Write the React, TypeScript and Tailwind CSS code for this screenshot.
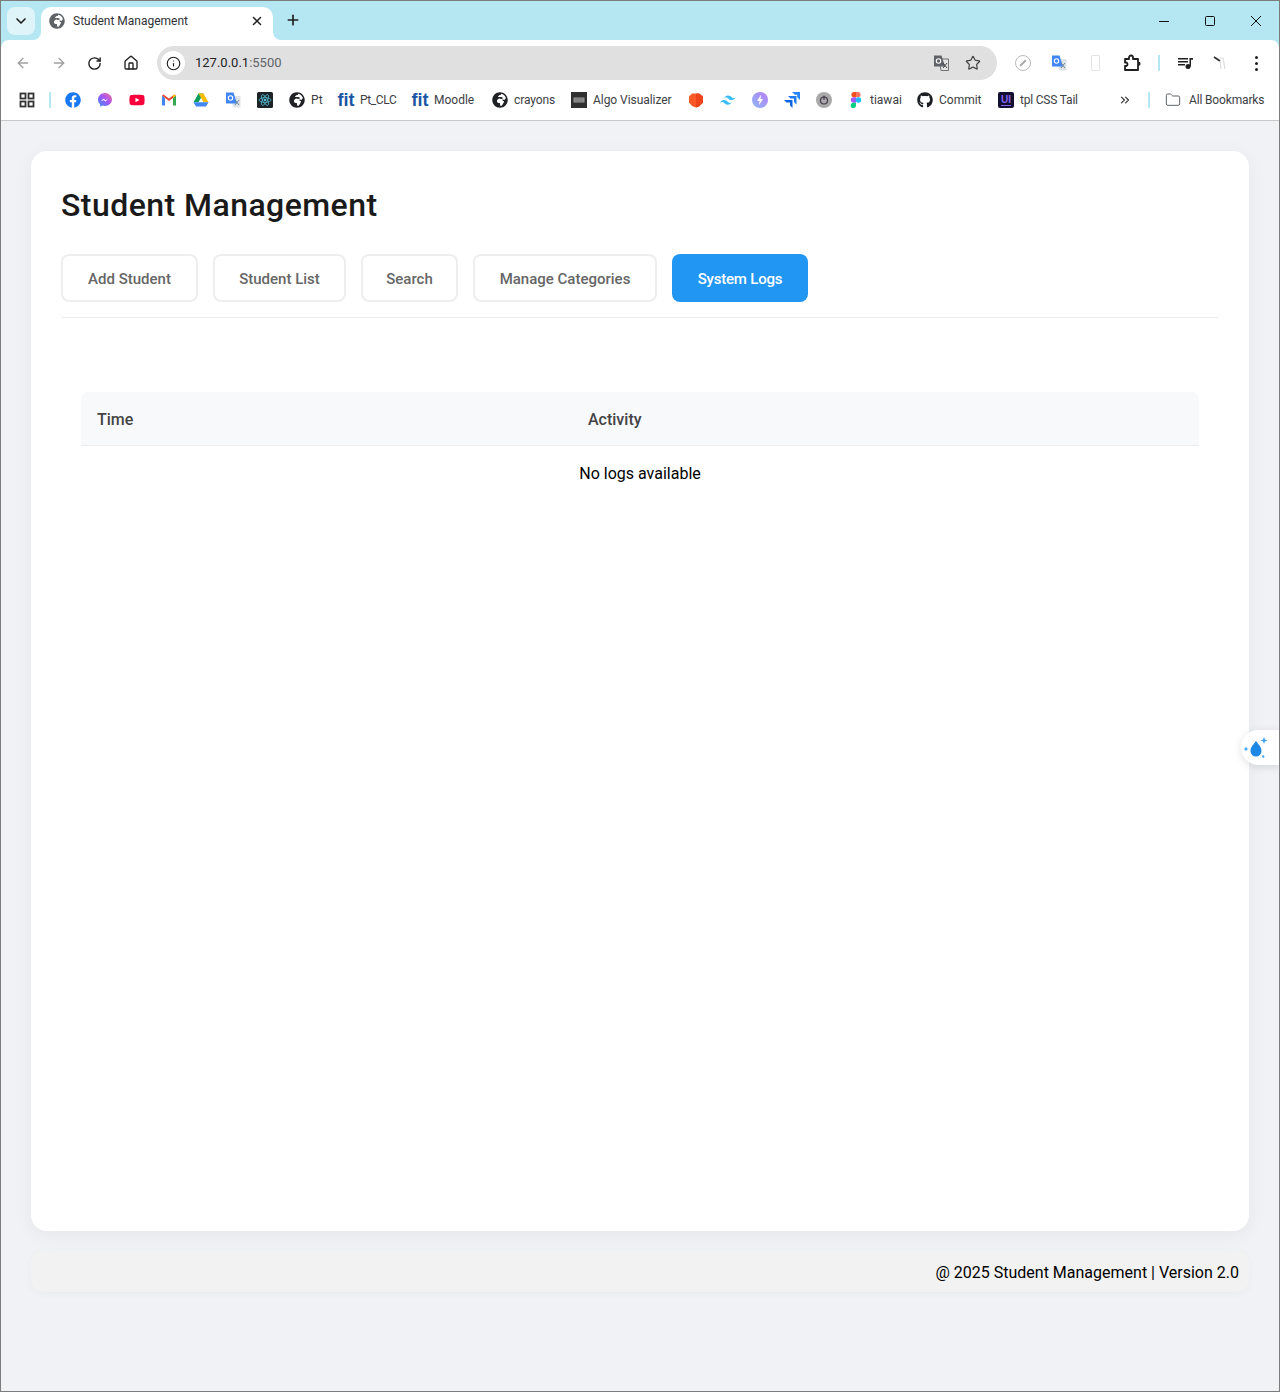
import { ArrowLeft, ArrowRight, RotateCw, House, Info, Star, X, Plus, ChevronDown, ChevronsRight, Folder } from 'lucide-react'
import { FaFacebook, FaGithub, FaGlobeAfrica, FaYoutube } from 'react-icons/fa'

function Translate({ dark = false }: { dark?: boolean }) {
  return (
    <svg width="16" height="16" viewBox="0 0 16 16">
      <path d="M6 4h9.500v11.500H8z" fill={dark ? '#e3e3e3' : '#dfe3e6'} stroke={dark ? '#555' : 'none'} strokeWidth="0.8" />
      <path d="M1 0.500h7.500L12 11.500H1z" fill={dark ? '#5f6368' : '#4285f4'} />
      <circle cx="5.500" cy="6" r="2.200" fill="none" stroke="#fff" strokeWidth="1.100" />
      <path d="M10 8l4 5M14 8l-4 5" stroke={dark ? '#444' : '#6a8a9c'} strokeWidth="1" />
    </svg>
  )
}

function Messenger() {
  return (
    <svg width="16" height="16" viewBox="0 0 16 16">
      <defs>
        <linearGradient id="msg" x1="0" y1="1" x2="1" y2="0">
          <stop offset="0" stopColor="#2f8cf5" />
          <stop offset="0.55" stopColor="#a855f7" />
          <stop offset="1" stopColor="#fb7185" />
        </linearGradient>
      </defs>
      <path d="M8 1C4 1 1 3.900 1 7.600c0 2 .8 3.600 2.200 4.800v2.400l2.200-1.200c.8.200 1.700.4 2.600.4 4 0 7-2.900 7-6.400S12 1 8 1z" fill="url(#msg)" />
      <path d="M3.800 9.600l2.700-3 2 1.600 2.700-1.600-2.600 3-2-1.600z" fill="#fff" />
    </svg>
  )
}

function Gmail() {
  return (
    <svg width="16" height="16" viewBox="0 0 16 16">
      <path d="M1 3.500v10h3V6z" fill="#4285f4" />
      <path d="M12 6v7.500h3v-10z" fill="#34a853" />
      <path d="M1 3.500L8 9l7-5.500-1.500-1L8 6.500 2.500 2.500z" fill="#ea4335" />
      <path d="M12 6l3-2.500-1.500-1L12 3.600z" fill="#fbbc04" />
    </svg>
  )
}

function Drive() {
  return (
    <svg width="16" height="16" viewBox="0 0 16 16">
      <path d="M5.500 1.500h5l-5 8.700H0.500z" fill="#0f9d58" />
      <path d="M10.500 1.500l5 8.700h-5l-5-8.700z" fill="#fbbc04" />
      <path d="M0.500 10.200h15L13 14.500H3z" fill="#4285f4" />
    </svg>
  )
}

function ReactIcon() {
  return (
    <svg width="16" height="16" viewBox="0 0 16 16">
      <rect width="16" height="16" rx="1.500" fill="#1c2429" />
      <circle cx="8" cy="8" r="1.300" fill="#58c4dc" />
      <g fill="none" stroke="#58c4dc" strokeWidth="0.7">
        <ellipse cx="8" cy="8" rx="6" ry="2.400" />
        <ellipse cx="8" cy="8" rx="6" ry="2.400" transform="rotate(60 8 8)" />
        <ellipse cx="8" cy="8" rx="6" ry="2.400" transform="rotate(120 8 8)" />
      </g>
    </svg>
  )
}

function Fit() {
  return <span className="text-[18px] leading-4 font-bold text-[#1b55a3] font-['Liberation_Sans',sans-serif]">fit</span>
}

function Algo() {
  return (
    <svg width="16" height="16" viewBox="0 0 16 16">
      <rect width="16" height="16" fill="#303030" />
      <rect x="2.500" y="5.500" width="11" height="5" fill="#9a9a9a" />
      <path d="M3.500 7h9M3.500 9h9" stroke="#5a5a5a" strokeWidth="0.7" />
    </svg>
  )
}

function Brave() {
  return (
    <svg width="16" height="16" viewBox="0 0 16 16">
      <path d="M4 1.500h7l4 3v6l-4 4-3 1-4-1.500L1 10.500v-6z" fill="#fb5a26" />
      <path d="M8 1.500h3l4 3v6l-4 4-3 1z" fill="#f0451c" />
    </svg>
  )
}

function Tailwind() {
  return (
    <svg width="16" height="16" viewBox="0 0 16 16">
      <path d="M8 3.500c-2 0-3.300 1-4 3 .8-1 1.700-1.400 2.700-1.100.6.100 1 .6 1.500 1 .8.800 1.700 1.700 3.600 1.700 2 0 3.300-1 4-3-.8 1-1.700 1.400-2.700 1.100-.6-.100-1-.6-1.500-1C10.800 4.400 9.900 3.500 8 3.500zM4 8.100c-2 0-3.300 1-4 3 .8-1 1.700-1.400 2.700-1.100.6.100 1 .6 1.500 1 .8.800 1.700 1.700 3.600 1.700 2 0 3.300-1 4-3-.8 1-1.700 1.400-2.700 1.100-.6-.100-1-.6-1.500-1C6.800 9 5.900 8.100 4 8.100z" fill="#38bdf8" />
    </svg>
  )
}

function Bolt() {
  return (
    <svg width="16" height="16" viewBox="0 0 16 16">
      <defs>
        <linearGradient id="bolt" x1="0" y1="1" x2="1" y2="0">
          <stop offset="0" stopColor="#8fb8f7" />
          <stop offset="1" stopColor="#b67cf5" />
        </linearGradient>
      </defs>
      <circle cx="8" cy="8" r="8" fill="url(#bolt)" />
      <path d="M9 2.800L5 9h2.500L7 13.200 11 7H8.500z" fill="#fff" />
    </svg>
  )
}

function Jira() {
  return (
    <svg width="16" height="16" viewBox="0 0 16 16">
      <path d="M8 0h8v8l-2.800-2.800V2.800H10.800z" fill="#2684ff" />
      <path d="M4 4h8.500v8.500L10 10V6.500H6.500z" fill="#1d7af0" />
      <path d="M0 8h8.500v8L6 13.500V10.500H2.500z" fill="#0c66e4" />
    </svg>
  )
}

function Power() {
  return (
    <svg width="16" height="16" viewBox="0 0 16 16">
      <circle cx="8" cy="8" r="8" fill="#a9a9a9" />
      <circle cx="8" cy="8.500" r="3.500" fill="none" stroke="#40384a" strokeWidth="1.200" />
      <path d="M8 3.800v4" stroke="#40384a" strokeWidth="1.300" />
    </svg>
  )
}

function Figma() {
  return (
    <svg width="16" height="16" viewBox="0 0 16 16">
      <path d="M8 0H5.500a2.700 2.700 0 000 5.300H8z" fill="#f24e1e" />
      <path d="M8 0h2.500a2.700 2.700 0 010 5.300H8z" fill="#ff7262" />
      <path d="M8 5.300H5.500a2.700 2.700 0 000 5.400H8z" fill="#a259ff" />
      <circle cx="10.500" cy="8" r="2.700" fill="#1abcfe" />
      <path d="M8 10.700H5.500A2.700 2.700 0 108 13.400z" fill="#0acf83" />
    </svg>
  )
}

function UiIcon() {
  return (
    <div className="w-4 h-4 rounded-[2px] bg-[#121030] flex flex-col items-center justify-center">
      <span className="text-[10px] leading-[10px] font-bold text-[#8a63f5] font-['Liberation_Sans',sans-serif]">UI</span>
      <span className="w-[10px] h-px bg-[#8a63f5]" />
    </div>
  )
}

function Mark({ label, width, children }: { label?: string; width?: string; children: React.ReactNode }) {
  return (
    <div className="flex items-center px-2 h-7 shrink-0">
      <div className="w-4 h-4 flex items-center justify-center">{children}</div>
      {label && <span className={`ml-1.5 text-xs text-[#3c4043] whitespace-nowrap ${width}`}>{label}</span>}
    </div>
  )
}

const tabs = [
  { label: 'Add Student', width: 'w-[137px]' },
  { label: 'Student List', width: 'w-[133px]' },
  { label: 'Search', width: 'w-[97px]' },
  { label: 'Manage Categories', width: 'w-[184px]' },
  { label: 'System Logs', width: 'w-[136px]' },
]

export default function App() {
  return (
    <div className="w-[1280px] h-[1392px] border border-[#7c7c7c] bg-[#f0f2f5] font-['Roboto',sans-serif] relative overflow-hidden">
      {/* tab strip */}
      <div className="h-[39px] bg-[#b5e7f3] flex items-start pl-1.5 pt-1.5 text-[#1f1f1f]">
        <div className="w-7 h-7 rounded-lg bg-[#dff4f9] flex items-center justify-center">
          <ChevronDown size={16} strokeWidth={2.5} />
        </div>
        <div className="relative ml-1.5 w-[232px] h-[33px] bg-white rounded-t-[10px] flex items-center pl-2 pr-[9px] pb-1.5">
          <FaGlobeAfrica size={16} className="text-[#5f6368]" />
          <span className="ml-2 text-xs flex-1 text-[#303134]">Student Management</span>
          <X size={14} strokeWidth={2.5} />
          <div className="absolute right-[-8px] bottom-0 w-2 h-2 bg-white">
            <div className="w-2 h-2 bg-[#b5e7f3] rounded-bl-lg" />
          </div>
          <div className="absolute left-[-8px] bottom-0 w-2 h-2 bg-white">
            <div className="w-2 h-2 bg-[#b5e7f3] rounded-br-lg" />
          </div>
        </div>
        <Plus size={16} strokeWidth={2.5} className="ml-3 mt-[5px]" />
        <div className="ml-auto flex items-center h-7 text-[#111]">
          <svg width="46" height="12" viewBox="0 0 46 12"><path d="M18 6.500h10" stroke="currentColor" /></svg>
          <svg width="46" height="12" viewBox="0 0 46 12"><rect x="18.500" y="1.500" width="9" height="9" rx="1" fill="none" stroke="currentColor" /></svg>
          <svg width="46" height="12" viewBox="0 0 46 12"><path d="M18 1l10 10M28 1L18 11" stroke="currentColor" /></svg>
        </div>
      </div>

      {/* address bar */}
      <div className="bg-[#b5e7f3]">
        <div className="h-10 bg-white rounded-t-[8px] flex items-center pl-3.5 pt-1.5 text-[#1f1f1f]">
          <ArrowLeft size={16} className="text-[#a0a0a0]" />
          <ArrowRight size={16} className="ml-5 text-[#a0a0a0]" />
          <RotateCw size={15} strokeWidth={2.2} className="ml-5" />
          <House size={16} strokeWidth={2} className="ml-[21px]" />
          <div className="ml-[18px] w-[840px] h-[34px] rounded-full bg-[#e0e0e0] flex items-center pl-1">
            <div className="w-6 h-6 rounded-full bg-white flex items-center justify-center">
              <Info size={15} strokeWidth={1.8} />
            </div>
            <span className="ml-2.5 text-[13px]"><span className="text-[#202124]">127.0.0.1</span><span className="text-[#5f6368]">:5500</span></span>
            <div className="ml-auto mr-4 flex items-center gap-4">
              <Translate dark />
              <Star size={16} strokeWidth={1.8} className="text-[#444]" />
            </div>
          </div>
          <div className="ml-[18px] w-4 h-4 rounded-full border border-[#bbb] flex items-center justify-center">
            <span className="w-[2px] h-2 bg-[#aaa] rotate-45" />
          </div>
          <div className="ml-5"><Translate /></div>
          <div className="w-[9px] h-4 ml-[24px] border border-[#e3e3e3] rounded-[1px]" />
          <svg width="18" height="18" viewBox="0 0 18 18" className="ml-[23px]" fill="none" stroke="#1f1f1f" strokeWidth="1.800" strokeLinejoin="round">
            <path d="M2 5h4V3.500a2 2 0 014 0V5h5v4h1.500v1.500H15V16H2v-4h1.500a2 2 0 000-3.500H2z" />
          </svg>
          <div className="ml-[17px] w-0.5 h-4 bg-[#b5e7f3]" />
          <svg width="16" height="16" viewBox="0 0 16 16" className="ml-[17px]" fill="#1f1f1f">
            <path d="M1 3h10v1.500H1zM1 6h10v1.500H1zM1 9h7v1.500H1z" />
            <circle cx="11" cy="11.500" r="2.500" />
            <path d="M12.500 3H16v1.800h-2V11.500h-1.500z" />
          </svg>
          <svg width="16" height="16" viewBox="0 0 16 16" className="ml-[19px]">
            <path d="M2 2l6 4" stroke="#333" strokeWidth="1.800" />
            <path d="M8 3h3l2 11M8 6l1 8" stroke="#ddd" strokeWidth="1.200" fill="none" />
          </svg>
          <div className="ml-[27px] flex flex-col gap-[3px]">
            <span className="w-[3px] h-[3px] rounded-full bg-[#1f1f1f]" />
            <span className="w-[3px] h-[3px] rounded-full bg-[#1f1f1f]" />
            <span className="w-[3px] h-[3px] rounded-full bg-[#1f1f1f]" />
          </div>
        </div>
      </div>

      {/* bookmarks */}
      <div className="h-[41px] bg-white border-b border-[#c8c8c8] flex items-center pl-[18px]">
        <svg width="16" height="16" viewBox="0 0 16 16" fill="none" stroke="#333" strokeWidth="1.800">
          <rect x="1.500" y="1.500" width="5" height="5" />
          <rect x="9.500" y="1.500" width="5" height="5" />
          <rect x="1.500" y="9.500" width="5" height="5" />
          <rect x="9.500" y="9.500" width="5" height="5" />
        </svg>
        <div className="ml-[14px] w-0.5 h-4 bg-[#b5e7f3] mr-1.5" />
        <Mark><FaFacebook size={16} className="text-[#1877f2]" /></Mark>
        <Mark><Messenger /></Mark>
        <Mark><FaYoutube size={16} className="text-[#f8003c]" /></Mark>
        <Mark><Gmail /></Mark>
        <Mark><Drive /></Mark>
        <Mark><Translate /></Mark>
        <Mark><ReactIcon /></Mark>
        <Mark label="Pt" width="w-[11px]"><FaGlobeAfrica size={16} className="text-[#202124]" /></Mark>
        <Mark label="Pt_CLC" width="w-[36px] tracking-[-0.4px]"><Fit /></Mark>
        <Mark label="Moodle" width="w-[42px]"><Fit /></Mark>
        <Mark label="crayons" width="w-[41px] tracking-[-0.1px]"><FaGlobeAfrica size={16} className="text-[#202124]" /></Mark>
        <Mark label="Algo Visualizer" width="w-[79px] tracking-[-0.05px]"><Algo /></Mark>
        <Mark><Brave /></Mark>
        <Mark><Tailwind /></Mark>
        <Mark><Bolt /></Mark>
        <Mark><Jira /></Mark>
        <Mark><Power /></Mark>
        <Mark label="tiawai" width="w-[31px]"><Figma /></Mark>
        <Mark label="Commit" width="w-[43px]"><FaGithub size={16} className="text-[#1b1f23]" /></Mark>
        <Mark label="tpl CSS Tail" width="w-[58px] tracking-[-0.2px]"><UiIcon /></Mark>
        <ChevronsRight size={14} strokeWidth={2} className="ml-[32px] text-[#333]" />
        <div className="ml-4 w-0.5 h-4 bg-[#b5e7f3]" />
        <Folder size={16} strokeWidth={1.5} className="ml-[15px] text-[#5f6368]" />
        <span className="ml-2 text-xs tracking-[-0.15px] text-[#3c4043] whitespace-nowrap">All Bookmarks</span>
      </div>

      {/* page */}
      <div className="px-[30px] pt-[30px]">
        <div className="h-[1080px] bg-white rounded-2xl shadow-[0_4px_20px_rgba(0,0,0,0.05)] p-[30px]">
          <h1 className="text-[32px] leading-[48px] tracking-[0.45px] font-medium text-[#1a1a1a]">Student Management</h1>
          <div className="mt-[25px] pb-[15px] border-b border-[#eeeeee] flex gap-[15px]">
            {tabs.map(t => (
              <button
                key={t.label}
                className={t.label === 'System Logs'
                  ? `h-12 ${t.width} pt-0.5 rounded-lg bg-[#2196f3] text-white text-[15px] font-medium tracking-[-0.2px]`
                  : `h-12 ${t.width} pt-0.5 rounded-lg border-2 border-[#eeeeee] bg-white text-[#666666] text-[15px] font-medium`}
              >
                {t.label}
              </button>
            ))}
          </div>
          <div className="mt-[74px] px-5">
            <table className="w-full table-fixed">
              <thead>
                <tr className="bg-[#f8f9fa] border-b border-[#eeeeee] h-[53px]">
                  <th className="w-[491px] pl-4 pt-1 text-left font-medium text-[#444444] rounded-tl-lg">Time</th>
                  <th className="pl-4 pt-1 text-left font-medium text-[#444444] rounded-tr-lg">Activity</th>
                </tr>
              </thead>
              <tbody>
                <tr className="h-[58px]">
                  <td colSpan={2} className="text-center text-black">No logs available</td>
                </tr>
              </tbody>
            </table>
          </div>
        </div>
        <div className="mt-5 h-[41px] pt-0.5 bg-[#f2f2f2] rounded-xl shadow-[0_2px_10px_rgba(0,0,0,0.03)] flex items-center justify-end pr-2.5 text-black">
          @ 2025 Student Management | Version 2.0
        </div>
      </div>

      {/* floating helper */}
      <div className="absolute right-[-2px] top-[729px] w-10 h-[35px] rounded-l-full bg-white shadow-[0_2px_8px_rgba(0,0,0,0.12)] flex items-center pl-0.5">
        <svg width="26" height="26" viewBox="0 0 26 26">
          <path d="M13 6c-2.500 3.500-5.500 6-5.500 10a5.500 5.500 0 0011 0C18.500 12 15.500 9.500 13 6z" fill="#1e88e5" />
          <path d="M21 2l1 2.500 2.500 1-2.500 1L21 9l-1-2.500-2.500-1 2.500-1zM3 11.500l.8 1.700 1.700.8-1.700.8L3 16.500l-.8-1.700-1.700-.8 1.700-.8zM19 21.500a1.200 1.200 0 102.400 0 1.200 1.200 0 00-2.400 0z" fill="#42a5f5" />
        </svg>
      </div>
    </div>
  )
}
